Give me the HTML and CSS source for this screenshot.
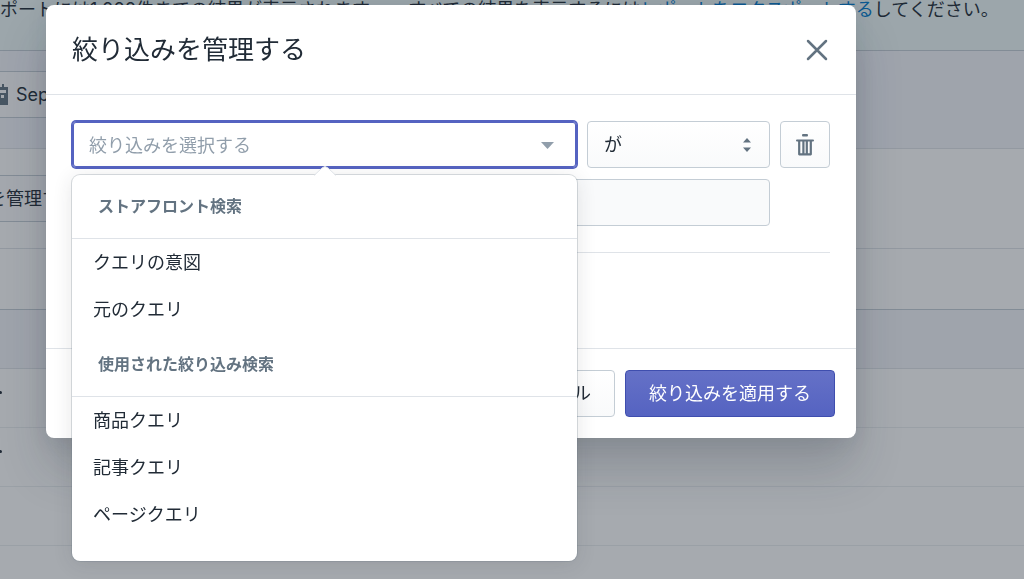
FILE: index.html
```html
<!DOCTYPE html>
<html lang="ja">
<head>
<meta charset="utf-8">
<meta name="viewport" content="width=device-width, initial-scale=1">
<title>絞り込みを管理する</title>
<link rel="stylesheet" href="styles.css">
</head>
<body>
<main class="page">
  <div class="banner">
    <span>ポートには1,000件までの結果が表示されます。</span>
    <span>すべての結果を表示するには<a href="#export">レポートをエクスポートする</a>してください。</span>
  </div>
  <div class="toolbar">
    <button class="page-button date-button" type="button">
      <svg class="calendar" viewBox="0 0 18 22" aria-hidden="true"><path fill-rule="evenodd" d="M0 3h3V0h3v3h6V0h2v3h4v18H0zM2 6v3h14V6zM11 11v3h3v-3z"/></svg>
      Sep 1
    </button>
  </div>
  <section class="report">
    <div class="report-filters">
      <button class="page-button manage-button" type="button">を管理する</button>
    </div>
    <div class="report-summary"></div>
    <div class="report-head"></div>
    <div class="report-row"><span class="dot"></span></div>
    <div class="report-row"><span class="dot"></span></div>
    <div class="report-row"></div>
    <div class="report-row"></div>
  </section>
</main>

<div class="overlay">
  <div class="modal" role="dialog" aria-modal="true" aria-labelledby="modal-title">
    <header class="modal-header">
      <h1 class="modal-title" id="modal-title">絞り込みを管理する</h1>
      <button class="close" type="button" aria-label="閉じる">
        <svg viewBox="0 0 22 22" width="22" height="22" aria-hidden="true"><path d="M2 2l18 18M20 2L2 20"/></svg>
      </button>
    </header>
    <div class="modal-body">
      <div class="filter">
        <div class="combo">
          <input class="combo-input" type="text" role="combobox" aria-expanded="true" aria-controls="options" aria-label="絞り込み" placeholder="絞り込みを選択する">
          <svg class="caret" viewBox="0 0 13 7" width="13" height="7" aria-hidden="true"><path d="M0 0h13L6.500 7z"/></svg>
          <div class="popover" id="options" role="listbox" aria-label="絞り込み">
            <svg class="tip" viewBox="0 0 22 10" width="22" height="10" aria-hidden="true"><path class="tip-fill" d="M0 10L8 2Q11-1 14 2L22 10z"/><path class="tip-line" d="M0 9.500L8 2Q11-1 14 2L22 9.500"/></svg>
            <div role="group" aria-labelledby="group-storefront">
              <h2 class="group-title" id="group-storefront">ストアフロント検索</h2>
              <div class="option" role="option">クエリの意図</div>
              <div class="option" role="option">元のクエリ</div>
            </div>
            <div role="group" aria-labelledby="group-refinement">
              <h2 class="group-title" id="group-refinement">使用された絞り込み検索</h2>
              <div class="option" role="option">商品クエリ</div>
              <div class="option" role="option">記事クエリ</div>
              <div class="option" role="option">ページクエリ</div>
            </div>
          </div>
        </div>
        <div class="operator">
          <select class="operator-select" aria-label="条件"><option>が</option></select>
          <svg class="sorter" viewBox="0 0 8 14" width="8" height="14" aria-hidden="true"><path d="M0 4.500L4 0l4 4.500zM0 9.500h8L4 14z"/></svg>
        </div>
        <button class="button trash-button" type="button" aria-label="削除">
          <svg viewBox="0 0 18 22" width="18" height="22" aria-hidden="true"><path class="solid" d="M7 0h4q1 0 1 1.200T11 2.400H7Q6 2.400 6 1.200T7 0zM1 5.400h16q1 0 1 1.100t-1 1.100H1q-1 0-1-1.100t1-1.100z"/><path class="line" d="M3.200 7v13.300h11.600V7M7.400 7v13M10.800 7v13"/></svg>
        </button>
        <input class="value" type="text" aria-label="値" disabled>
      </div>
      <hr class="divider">
    </div>
    <footer class="modal-footer">
      <button class="button" type="button">キャンセル</button>
      <button class="button primary" type="button">絞り込みを適用する</button>
    </footer>
  </div>
</div>
</body>
</html>
```

FILE: styles.css
```css
* { box-sizing: border-box; }

body {
  margin: 0;
  min-height: 100vh;
  overflow: hidden;
  background: #f3f5fb;
  color: #212b36;
  font-family: Inter, "Noto Sans CJK JP", sans-serif;
  font-size: 18px;
  line-height: 26px;
}

button, input, select { font: inherit; color: inherit; margin: 0; }

/* Page behind the dialog */
.page { height: 100vh; overflow: hidden; }

.banner {
  display: flex;
  gap: 22px;
  height: 51px;
  padding-bottom: 28px;
  line-height: 20px;
  white-space: nowrap;
  background: #eef9f9;
  border-bottom: 1px solid #c4cdd5;
}

.banner a { color: #007ace; text-decoration: none; }

.toolbar { padding: 20px 0 30px; }

.page-button {
  display: flex;
  align-items: center;
  gap: 8px;
  height: 47px;
  padding: 0 16px 0 0;
  white-space: nowrap;
  background: #fcfcfd;
  border: 1px solid #c4cdd5;
  border-left: 0;
}

.date-button { margin-left: -10px; }
.manage-button { margin-left: -12px; }

.calendar { width: 18px; height: 22px; fill: #637381; }

.report { background: #fff; border-top: 1px solid #dfe3e8; }
.report-filters { padding: 26px 0; border-bottom: 1px solid #dfe3e8; }
.report-summary { height: 61px; border-bottom: 1px solid #c4cdd5; }
.report-head { height: 59px; background: #f4f5fa; border-bottom: 1px solid #dfe3e8; }
.report-row { display: flex; align-items: center; height: 59px; padding-bottom: 12px; border-bottom: 1px solid #ebeef0; }
.dot { width: 2px; height: 3px; border-radius: 0 2px 2px 0; background: #212b36; }

/* Dialog */
.overlay {
  position: fixed;
  inset: 0;
  padding: 5px 16.400% 0 4.500%;
  background: rgba(33, 43, 54, 0.4);
}

.modal {
  background: #fff;
  border-radius: 8px;
  box-shadow: 0 31px 48px rgba(32, 42, 53, 0.2), 0 2px 20px rgba(32, 42, 54, 0.1);
}

.modal-header {
  display: flex;
  align-items: center;
  justify-content: space-between;
  height: 90px;
  padding: 0 26px;
  border-bottom: 1px solid #dfe3e8;
}

.modal-title { margin: 0; font-size: 26px; line-height: 36px; font-weight: 400; }

.close {
  display: flex;
  padding: 2px;
  background: none;
  border: 0;
}

.close path { fill: none; stroke: #637381; stroke-width: 2.500; stroke-linecap: round; }

.modal-body { padding: 26px 26px 95px; }

.filter {
  display: grid;
  grid-template-columns: 1fr 183px 50px;
  gap: 11px 10px;
}

.combo, .operator { position: relative; }

.combo-input {
  display: block;
  width: 100%;
  height: 47px;
  padding: 1px 48px 0 16px;
  background: #fff;
  border: 1px solid #5563c1;
  border-radius: 4px;
  box-shadow: 0 0 0 1px #5563c1, inset 0 0 0 1px #5563c1;
  outline: 0;
}

.combo-input::placeholder { color: #919eab; opacity: 1; }

.caret { position: absolute; top: 21px; right: 23px; fill: #919eab; }

.operator-select, .button {
  height: 47px;
  background: linear-gradient(#fff, #f9fafb);
  border: 1px solid #c4cdd5;
  border-radius: 4px;
}

.operator-select {
  display: block;
  width: 100%;
  padding: 0 40px 0 16px;
  appearance: none;
}

.sorter { position: absolute; top: 17px; right: 19px; fill: #637381; }

.button { padding: 0 23px; white-space: nowrap; }
.trash-button { display: grid; place-items: center; padding: 0; }
.trash-button .solid { fill: #637381; }
.trash-button .line { fill: none; stroke: #637381; stroke-width: 2.200; stroke-linejoin: round; }

.value {
  grid-column: 1 / 3;
  height: 47px;
  background: #f9fafb;
  border: 1px solid #c4cdd5;
  border-radius: 4px;
}

.divider { margin: 26px 0 0; border: 0; border-top: 1px solid #dfe3e8; }

.modal-footer {
  display: flex;
  justify-content: flex-end;
  gap: 10px;
  padding: 21px;
  border-top: 1px solid #dfe3e8;
}

.primary {
  color: #fff;
  background: linear-gradient(#6571c7, #5563c1);
  border-color: #3f4eae;
}

/* Option list */
.popover {
  position: absolute;
  z-index: 1;
  top: 54px;
  left: 0;
  right: 0;
  padding-bottom: 23px;
  background: #fff;
  border-radius: 8px;
  box-shadow: 0 0 0 1px rgba(99, 115, 129, 0.24), 0 3px 20px rgba(39, 44, 48, 0.12);
}

.tip { position: absolute; top: -9px; left: calc(50% - 11px); }
.tip-fill { fill: #fff; }
.tip-line { fill: none; stroke: #dfe3e8; }

.group-title {
  margin: 0;
  padding: 19px 26px;
  color: #637381;
  font-size: 16px;
  line-height: 25px;
  font-weight: 700;
  border-bottom: 1px solid #dfe3e8;
}

.option { padding: 0 21px; line-height: 47px; }
```
